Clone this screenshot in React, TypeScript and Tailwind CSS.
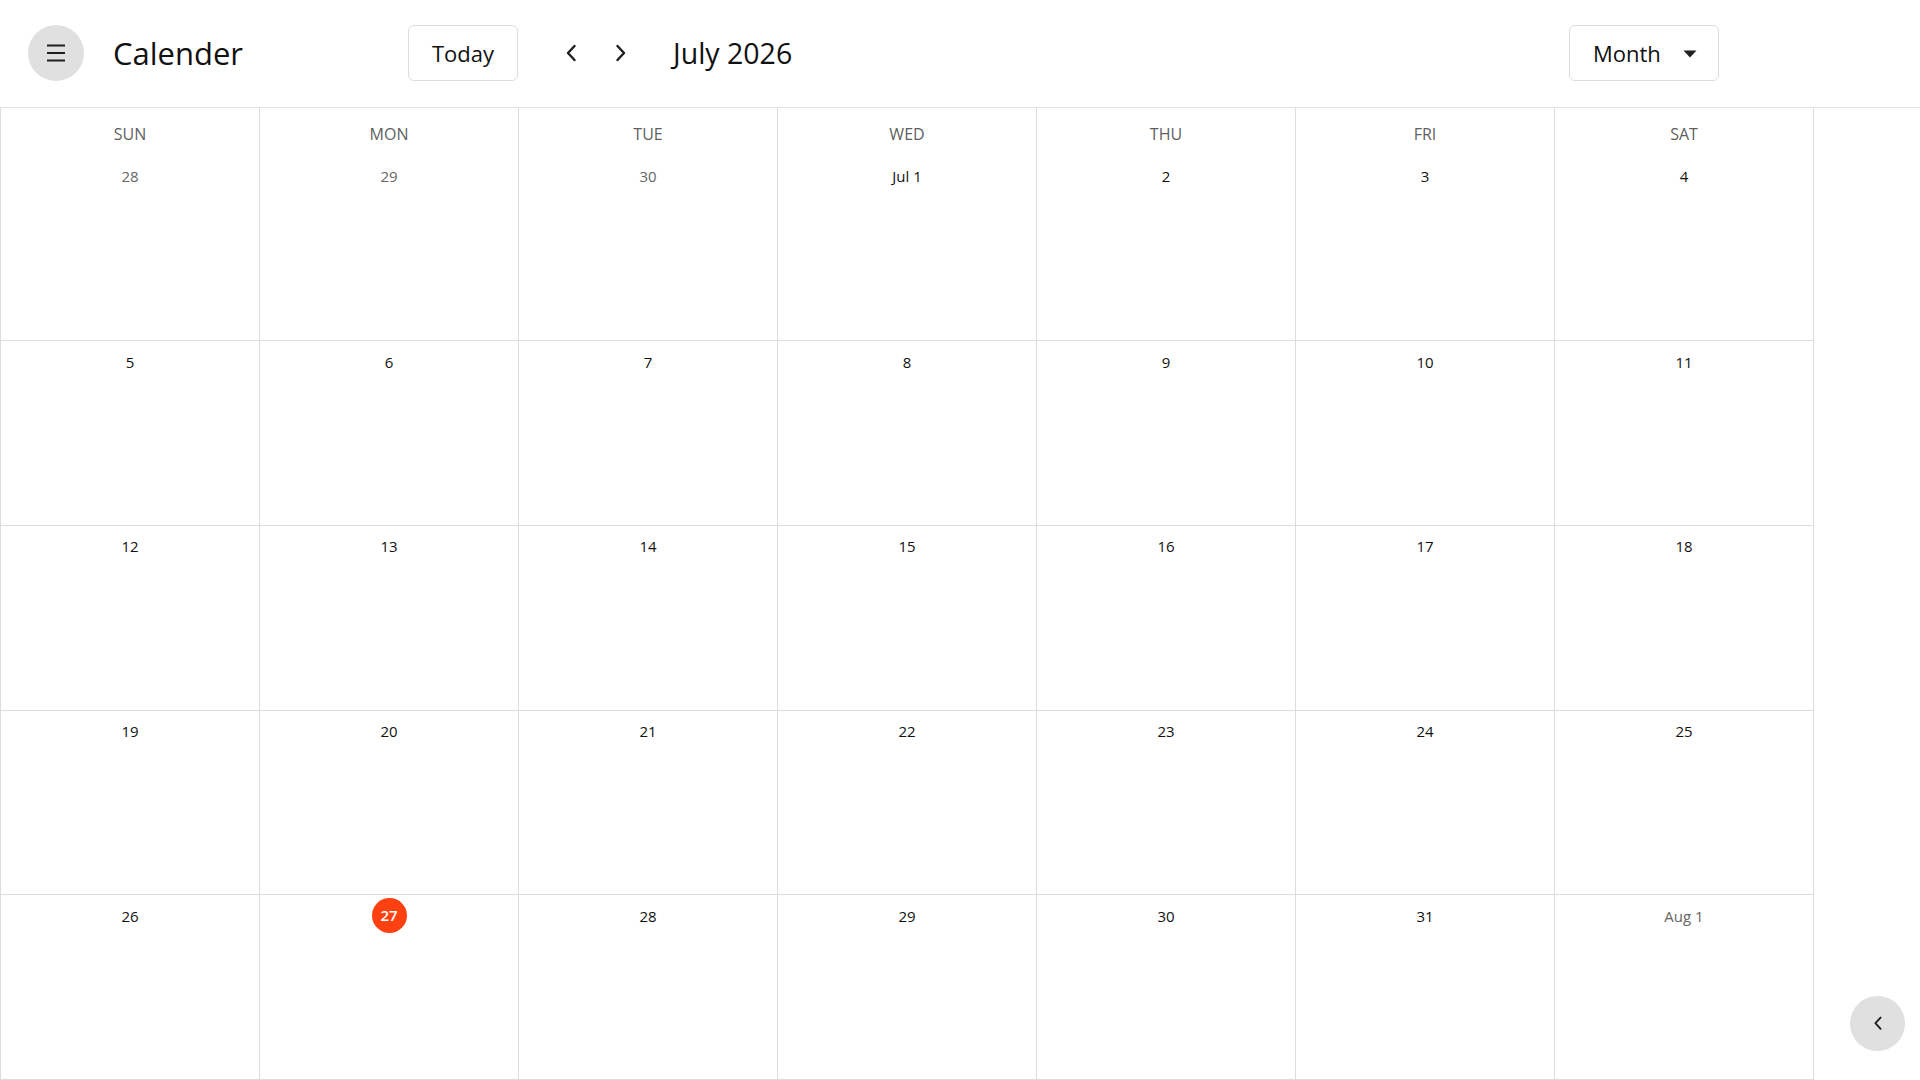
import React from 'react';

// ============================================================================
// Types / data
// ============================================================================

interface DayCell {
  label: string;
  muted?: boolean;
  today?: boolean;
}

const WEEKDAYS = ['SUN', 'MON', 'TUE', 'WED', 'THU', 'FRI', 'SAT'];

const WEEKS: DayCell[][] = [
  [
    { label: '28', muted: true },
    { label: '29', muted: true },
    { label: '30', muted: true },
    { label: 'Jul 1' },
    { label: '2' },
    { label: '3' },
    { label: '4' },
  ],
  ['5', '6', '7', '8', '9', '10', '11'].map((label) => ({ label })),
  ['12', '13', '14', '15', '16', '17', '18'].map((label) => ({ label })),
  ['19', '20', '21', '22', '23', '24', '25'].map((label) => ({ label })),
  [
    { label: '26' },
    { label: '27', today: true },
    { label: '28' },
    { label: '29' },
    { label: '30' },
    { label: '31' },
    { label: 'Aug 1', muted: true },
  ],
];

// ============================================================================
// Icons
// ============================================================================

const MenuIcon = () => (
  <svg width="20" height="18" viewBox="0 0 20 18" fill="none">
    <path d="M1 1.5h18M1 9h18M1 16.5h18" stroke="#1f1f1f" strokeWidth="2.2" strokeLinecap="butt" />
  </svg>
);

const Chevron = ({ dir, size = 1 }: { dir: 'left' | 'right'; size?: number }) => (
  <svg width={12 * size} height={18 * size} viewBox="0 0 12 18" fill="none">
    <path
      d={dir === 'left' ? 'M9.5 2L3 9l6.5 7' : 'M2.5 2L9 9l-6.5 7'}
      stroke="#1f1f1f"
      strokeWidth="2.4"
      strokeLinecap="round"
      strokeLinejoin="round"
    />
  </svg>
);

const Caret = () => (
  <svg width="14" height="8" viewBox="0 0 14 8">
    <path d="M0.5 0.5h13L7 7.5z" fill="#1f1f1f" />
  </svg>
);

// ============================================================================
// Calendar cell
// ============================================================================

const DateLabel: React.FC<{ cell: DayCell }> = ({ cell }) => {
  if (cell.today) {
    return (
      <span className="flex h-[35px] w-[35px] items-center justify-center rounded-full bg-[#ff4112] text-[15px] font-semibold leading-none text-white">
        {cell.label}
      </span>
    );
  }
  return (
    <span className={`text-[15px] leading-[20px] ${cell.muted ? 'text-[#666666]' : 'text-[#111111]'}`}>
      {cell.label}
    </span>
  );
};

// ============================================================================
// App
// ============================================================================

export default function App() {
  return (
    <div
      className="relative flex h-screen w-full flex-col overflow-hidden bg-white"
      style={{ fontFamily: '"Open Sans", "Noto Sans", Arial, sans-serif' }}
    >
      {/* Header */}
      <header className="flex h-[108px] shrink-0 items-center border-b border-[#e0e0e0] pb-px">
        <div className="flex w-[408px] items-center pl-[28px]">
          <button className="flex h-14 w-14 items-center justify-center rounded-full bg-[#e0e0e0]">
            <MenuIcon />
          </button>
          <span className="ml-[29px] text-[31px] leading-none text-[#111111]">Calender</span>
        </div>

        <button className="flex h-14 w-[110px] items-center justify-center rounded-md border border-[#dddddd] bg-white text-[22px] text-[#111111]">
          Today
        </button>

        <div className="ml-[33px] flex items-center gap-[10px]">
          <button className="flex h-10 w-10 items-center justify-center">
            <Chevron dir="left" />
          </button>
          <button className="flex h-10 w-10 items-center justify-center">
            <Chevron dir="right" />
          </button>
        </div>

        <span className="ml-[32px] text-[28.5px] leading-none text-[#111111]">July 2026</span>

        <button className="ml-auto mr-[201px] flex h-14 w-[150px] items-center justify-between rounded-md border border-[#dddddd] bg-white pl-[23px] pr-[21px] text-[22px] text-[#111111]">
          <span>Month</span>
          <span className="mt-[2px] flex">
            <Caret />
          </span>
        </button>
      </header>

      {/* Body */}
      <div className="flex min-h-0 flex-1">
        <div className="flex w-[1814px] flex-col border-b border-l border-[#dddddd]">
          {WEEKS.map((week, wi) => (
            <div
              key={wi}
              className={`grid grid-cols-7 ${wi === 0 ? 'h-[232px] shrink-0' : 'flex-1 border-t border-[#dddddd]'}`}
            >
              {week.map((cell, ci) => (
                <div key={ci} className="flex flex-col items-center border-r border-[#dddddd]">
                  {wi === 0 && (
                    <span className="mt-[14px] text-[16px] leading-[24px] text-[#5f5f5f]">{WEEKDAYS[ci]}</span>
                  )}
                  <div className={`flex h-[35px] items-center ${wi === 0 ? 'mt-[12px]' : 'mt-[3px]'}`}>
                    <DateLabel cell={cell} />
                  </div>
                </div>
              ))}
            </div>
          ))}
        </div>
        <div className="flex-1" />
      </div>

      {/* Floating side toggle */}
      <button className="absolute left-[1850px] top-[996px] flex h-[55px] w-[55px] items-center justify-center rounded-full bg-[#e0e0e0]">
        <Chevron dir="left" size={0.8} />
      </button>
    </div>
  );
}
